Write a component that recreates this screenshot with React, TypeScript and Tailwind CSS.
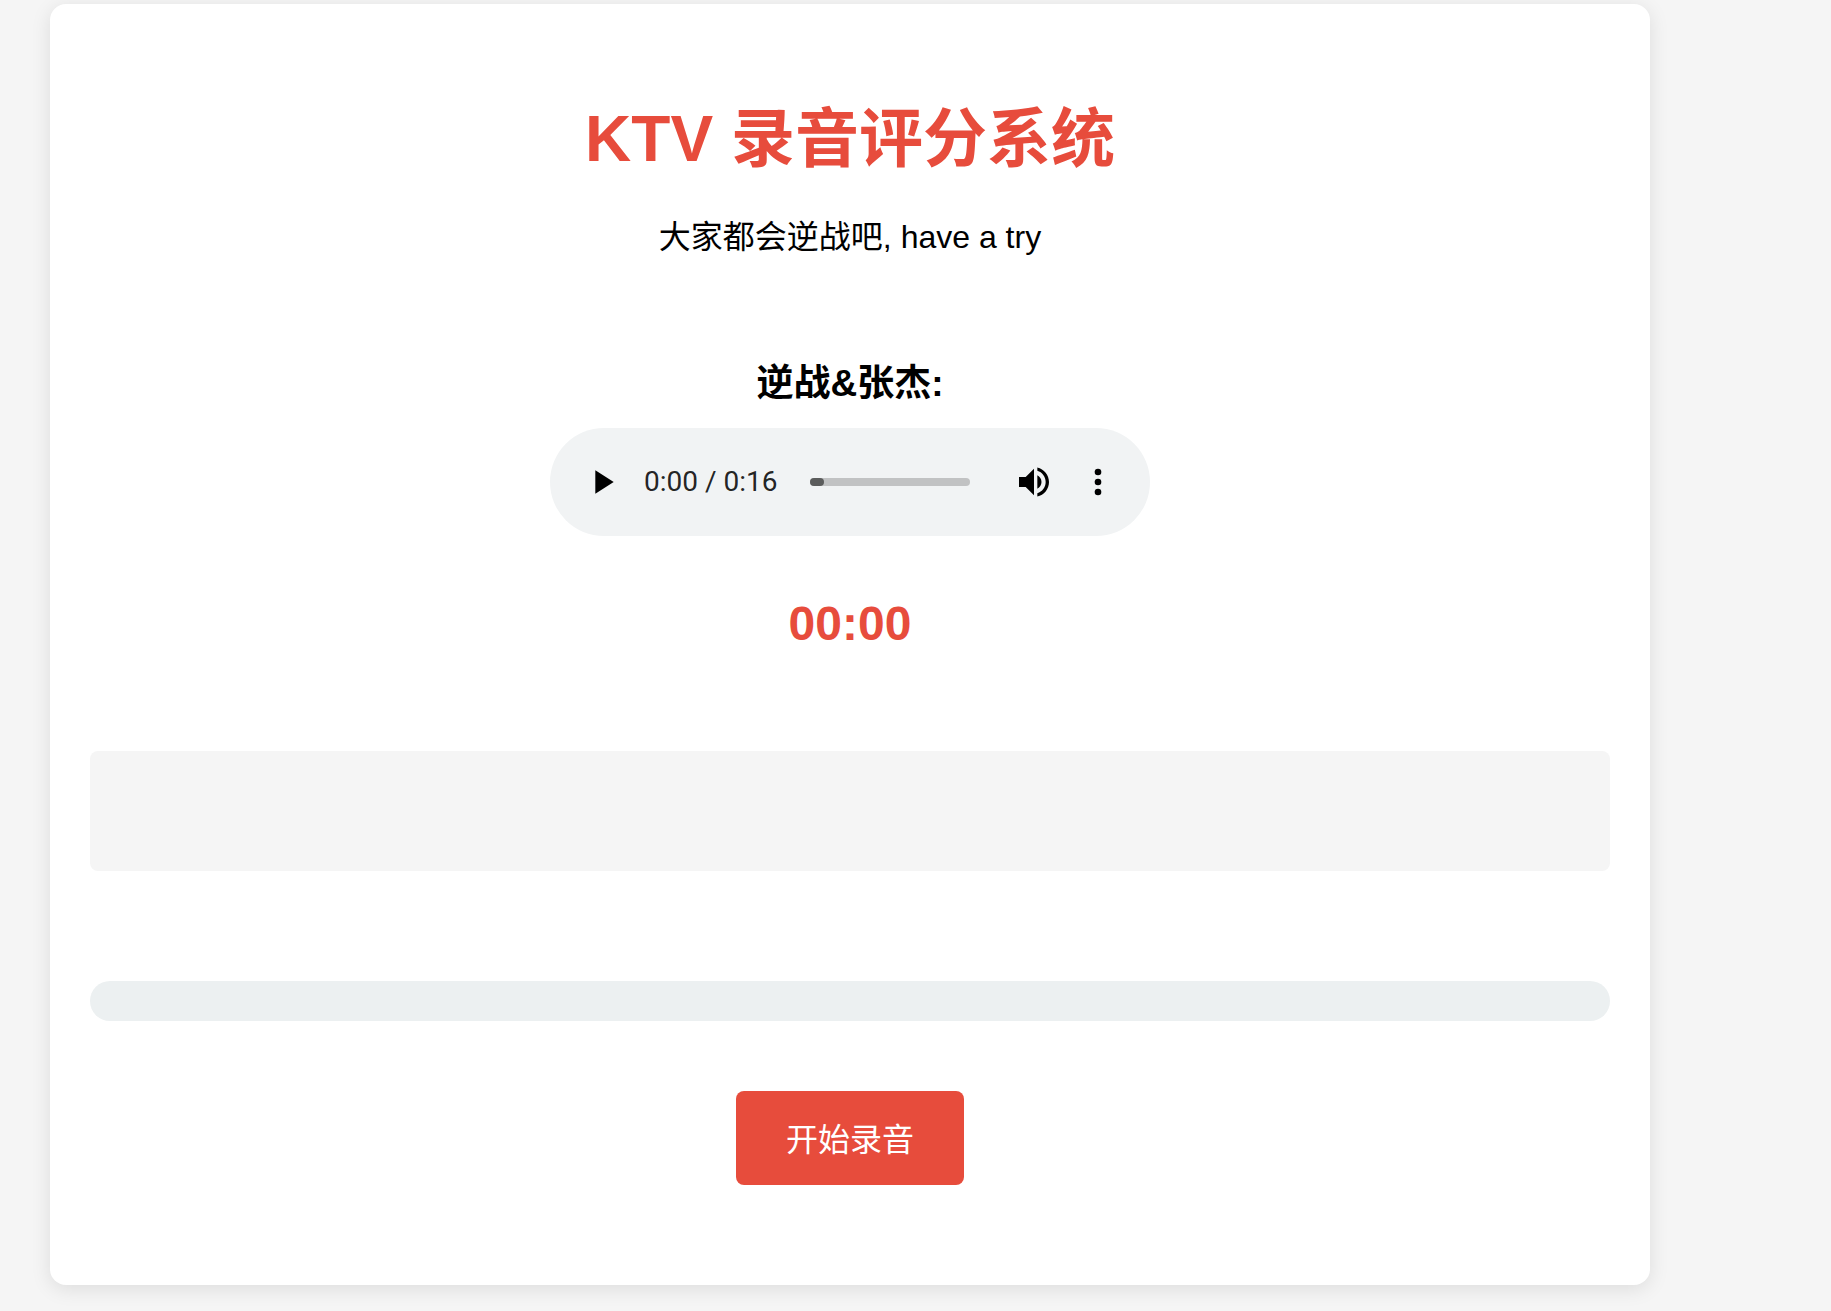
import { useState } from "react";

const formatTime = (seconds: number) => {
  const mins = Math.floor(seconds / 60);
  const secs = Math.floor(seconds % 60);
  return `${mins}:${secs.toString().padStart(2, "0")}`;
};

function AudioPlayer({ duration }: { duration: number }) {
  const [position, setPosition] = useState(0);

  return (
    <div className="flex items-center w-full max-w-[600px] h-[108px] px-8 rounded-full bg-[#f1f3f4] text-black">
      <button type="button" aria-label="播放" className="shrink-0">
        <svg viewBox="0 0 24 24" className="size-10" fill="currentColor">
          <path d="M8 5v14l11-7z" />
        </svg>
      </button>

      <span className="ml-[22px] w-[134px] font-[Roboto,sans-serif] text-[28px] leading-9 whitespace-nowrap text-black/87">
        {formatTime(position)} / {formatTime(duration)}
      </span>

      <input
        type="range"
        aria-label="播放进度"
        min={0}
        max={duration}
        value={position}
        onChange={(e) => setPosition(Number(e.target.value))}
        className="ml-8 mr-11 flex-1 min-w-0 h-2 appearance-none rounded-full bg-[#c1c2c3] [&::-webkit-slider-thumb]:appearance-none [&::-webkit-slider-thumb]:w-3.5 [&::-webkit-slider-thumb]:h-2 [&::-webkit-slider-thumb]:rounded-full [&::-webkit-slider-thumb]:bg-[#5b5c5c]"
      />

      <button type="button" aria-label="静音" className="shrink-0">
        <svg viewBox="0 0 24 24" className="size-10" fill="currentColor">
          <path d="M3 9v6h4l5 5V4L7 9H3zm13.500 3c0-1.770-1.020-3.290-2.500-4.030v8.050c1.480-.73 2.500-2.250 2.500-4.020zM14 3.230v2.060c2.890.86 5 3.540 5 6.710s-2.110 5.850-5 6.710v2.060c4.010-.91 7-4.490 7-8.770s-2.990-7.860-7-8.770z" />
        </svg>
      </button>

      <button type="button" aria-label="更多选项" className="ml-6 shrink-0">
        <svg viewBox="0 0 24 24" className="size-10" fill="currentColor">
          <circle cx="12" cy="6" r="2" />
          <circle cx="12" cy="12" r="2" />
          <circle cx="12" cy="18" r="2" />
        </svg>
      </button>
    </div>
  );
}

export default function App() {
  return (
    <div className="min-h-screen bg-[#f5f5f5] pt-1 pb-6 pl-[50px] pr-[181px] font-['Liberation_Sans','Noto_Sans_CJK_SC',sans-serif] text-black">
      <main className="flex flex-col items-center w-full max-w-[1600px] mx-auto px-10 pt-[87px] pb-[100px] rounded-2xl bg-white shadow-[0_4px_20px_rgba(0,0,0,0.1)]">
        <h1 className="text-[64px] leading-24 font-bold text-[#e74c3c]">
          KTV 录音评分系统
        </h1>
        <p className="mt-[26px] text-[32px] leading-12">
          大家都会逆战吧, have a try
        </p>

        <h3 className="mt-[93px] mb-3.5 text-[37px] leading-15 font-bold">
          逆战&amp;张杰:
        </h3>
        <AudioPlayer duration={16} />

        {/* Recording timer */}
        <div className="mt-[60px] text-5xl leading-14 font-bold text-[#e74c3c]">
          00:00
        </div>

        <div className="mt-[99px] w-full h-30 rounded-lg bg-[#f5f5f5]" />

        {/* Progress track */}
        <div className="mt-[110px] w-full h-10 rounded-full bg-[#ecf0f1]" />

        <button
          type="button"
          className="mt-[70px] px-[50px] pt-[25px] pb-[21px] rounded-lg bg-[#e74c3c] text-[32px] leading-12 text-white"
        >
          开始录音
        </button>
      </main>
    </div>
  );
}
